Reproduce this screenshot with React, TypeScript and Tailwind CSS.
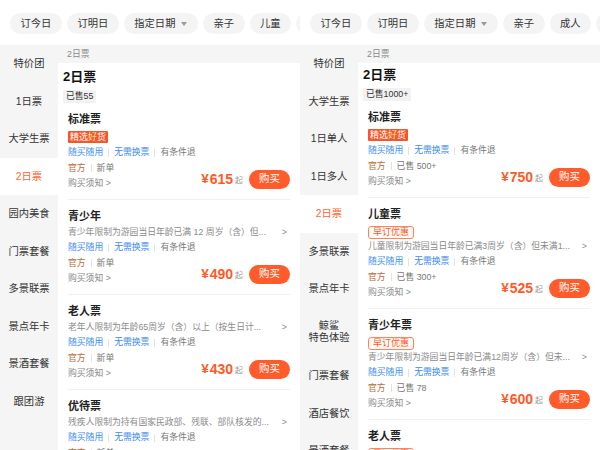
import React from "react";

type Block = {
  title: string;
  tag?: "pick" | "early";
  desc?: string;
  sold: string;
  price: string;
};

type PanelData = {
  chips: string[];
  side: (string | string[])[];
  selected: number;
  soldAll: string;
  headTop: string;
  blocks: Block[];
};

const left: PanelData = {
  chips: ["订今日", "订明日", "指定日期", "亲子", "儿童", "成人"],
  side: ["特价团", "1日票", "大学生票", "2日票", "园内美食", "门票套餐", "多景联票", "景点年卡", "景酒套餐", "跟团游"],
  selected: 3,
  soldAll: "已售55",
  headTop: "pt-[4px]",
  blocks: [
    { title: "标准票", tag: "pick", sold: "新单", price: "615" },
    { title: "青少年", desc: "青少年限制为游园当日年龄已满 12 周岁（含）但...", sold: "新单", price: "490" },
    { title: "老人票", desc: "老年人限制为年龄65周岁（含）以上（按生日计...", sold: "新单", price: "430" },
    { title: "优待票", desc: "残疾人限制为持有国家民政部、残联、部队核发的...", sold: "新单", price: "430" },
  ],
};

const right: PanelData = {
  chips: ["订今日", "订明日", "指定日期", "亲子", "成人", "学生"],
  side: ["特价团", "大学生票", "1日单人", "1日多人", "2日票", "多景联票", "景点年卡", ["鲸鲨", "特色体验"], "门票套餐", "酒店餐饮", "景酒套餐"],
  selected: 4,
  soldAll: "已售1000+",
  headTop: "pt-[2px]",
  blocks: [
    { title: "标准票", tag: "pick", sold: "已售 500+", price: "750" },
    { title: "儿童票", tag: "early", desc: "儿童限制为游园当日年龄已满3周岁（含）但未满1...", sold: "已售 300+", price: "525" },
    { title: "青少年票", tag: "early", desc: "青少年限制为游园当日年龄已满12周岁（含）但未...", sold: "已售 78", price: "600" },
    { title: "老人票", tag: "early", desc: "老年人限制为年龄65周岁（含）以上（按生日计...", sold: "已售 120", price: "430" },
  ],
};

function Sep() {
  return <span className="mx-[5px] inline-block h-[8px] w-px bg-[#e2e2e2]" />;
}

function Chip({ label }: { label: string }) {
  const hasArrow = label === "指定日期";
  return (
    <div className="flex h-[21px] shrink-0 items-center rounded-full bg-[#f4f4f4] px-[10.5px] text-[10.3px] text-[#333]">
      <span>{label}</span>
      {hasArrow && (
        <svg className="ml-[6px]" width="6" height="4" viewBox="0 0 6 4">
          <path d="M0 0h6L3 4z" fill="#9a9a9a" />
        </svg>
      )}
    </div>
  );
}

function TicketBlock({ b }: { b: Block }) {
  return (
    <div className="border-b border-[#f0f0f0] pt-[8px] pb-[7px]">
      <div className="h-[17px] text-[11px] font-semibold leading-[17px] text-[#222]">{b.title}</div>
      {b.tag === "pick" && (
        <div className="mt-[3px] mb-[2px] flex h-[12px]">
          <span className="rounded-[1px] bg-[#f4572a] px-[2px] text-[9px] leading-[12px] text-white">
            精选<span className="text-[#ffe7a6]">好</span>货
          </span>
        </div>
      )}
      {b.tag === "early" && (
        <div className="mt-[3px] flex h-[13px]">
          <span className="rounded-[3px] border border-[#ff845c] bg-[#fff9f6] px-[4px] text-[9px] leading-[11px] text-[#ff5a26]">
            早订优惠
          </span>
        </div>
      )}
      {b.desc && (
        <div className="flex h-[15.5px] items-center pr-[3px] text-[8.8px] leading-[15.5px] text-[#8a8a8a]">
          <span className="flex-1 overflow-hidden whitespace-nowrap">{b.desc}</span>
          <span className="ml-[6px]">&gt;</span>
        </div>
      )}
      <div className="flex h-[15.5px] items-center text-[8.8px] leading-[15.5px]">
        <span className="text-[#3d8df0]">随买随用</span>
        <Sep />
        <span className="text-[#3d8df0]">无需换票</span>
        <Sep />
        <span className="text-[#777]">有条件退</span>
      </div>
      <div className="flex items-end">
        <div className="flex-1">
          <div className="flex h-[15.5px] items-center text-[8.8px] leading-[15.5px]">
            <span className="text-[#b86a36]">官方</span>
            <Sep />
            <span className="text-[#777]">{b.sold}</span>
          </div>
          <div className="h-[15.5px] text-[8.8px] leading-[15.5px] text-[#888]">购买须知 &gt;</div>
        </div>
        <div className="mb-[3px] flex items-center">
          <span className="text-[13.5px] font-bold leading-none text-[#ff5a26]">¥</span>
          <span className="ml-[1px] text-[14px] font-bold leading-none text-[#ff5a26]">{b.price}</span>
          <span className="ml-[2px] mt-[4px] text-[8px] leading-none text-[#999]">起</span>
          <button className="ml-[6px] flex h-[19px] w-[41px] items-center justify-center rounded-full bg-[#ff5b2b] text-[10.5px] text-white">
            购买
          </button>
        </div>
      </div>
    </div>
  );
}

function Panel({ d }: { d: PanelData }) {
  return (
    <div className="flex h-[450px] w-[300px] shrink-0 flex-col overflow-hidden bg-white">
      <div className="flex h-[45px] shrink-0 items-center gap-[5px] overflow-hidden pl-[10px] pt-[2px]">
        {d.chips.map((c) => (
          <Chip key={c} label={c} />
        ))}
      </div>
      <div className="flex min-h-0 flex-1 bg-[#f5f5f5]">
        <aside className="flex w-[58px] shrink-0 flex-col">
          {d.side.map((s, i) => {
            const sel = i === d.selected;
            const two = Array.isArray(s);
            return (
              <div
                key={i}
                className={`flex shrink-0 flex-col items-center justify-center text-[10.3px] ${
                  two ? "h-[49.5px] leading-[12px]" : "h-[37.5px]"
                } ${sel ? "bg-white text-[#ff6633]" : "text-[#333]"}`}
              >
                {two ? (s as string[]).map((l) => <span key={l}>{l}</span>) : <span>{s as string}</span>}
              </div>
            );
          })}
        </aside>
        <main className="flex min-w-0 flex-1 flex-col">
          <div className="h-[18px] shrink-0 pl-[9px] text-[8.8px] leading-[18px] text-[#888]">2日票</div>
          <div className={`flex-1 bg-white ${d.headTop}`}>
            <div className="pl-[5px]">
              <div className="h-[20px] text-[13px] font-bold leading-[20px] text-[#111]">2日票</div>
              <div className="mt-[3px] flex h-[13px]">
                <span className="rounded-[1px] bg-[#f2f2f2] px-[3px] text-[8.8px] leading-[13px] text-[#333]">
                  {d.soldAll}
                </span>
              </div>
            </div>
            <div className="ml-[10px] mr-[10px]">
              {d.blocks.map((b, i) => (
                <TicketBlock key={i} b={b} />
              ))}
            </div>
          </div>
        </main>
      </div>
    </div>
  );
}

export default function App() {
  return (
    <div className="flex h-[450px] w-[600px] overflow-hidden bg-white font-['Liberation_Sans','Noto_Sans_CJK_SC',sans-serif]">
      <Panel d={left} />
      <Panel d={right} />
    </div>
  );
}
